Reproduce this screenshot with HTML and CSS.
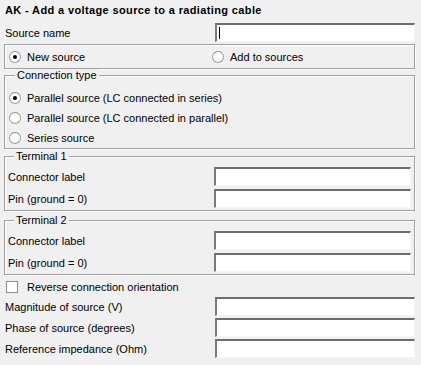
FILE: index.html
```html
<!DOCTYPE html>
<html lang="en">
<head>
    <meta charset="UTF-8">
    <title>AK - Add a voltage source to a radiating cable</title>
    <link rel="stylesheet" href="styles.css">
</head>
<body>
    <div class="dialog">
        <div class="title">AK - Add a voltage source to a radiating cable</div>

        <div class="row top-row">
            <span class="label">Source name</span>
            <input type="text" class="field focused">
        </div>

        <div class="group mode-group">
            <label class="option half"><span class="radio checked"></span>New source</label>
            <label class="option half"><span class="radio"></span>Add to sources</label>
        </div>

        <div class="group box box-connection">
            <span class="legend">Connection type</span>
            <label class="option"><span class="radio checked"></span>Parallel source (LC connected in series)</label>
            <label class="option"><span class="radio"></span>Parallel source (LC connected in parallel)</label>
            <label class="option"><span class="radio"></span>Series source</label>
        </div>

        <div class="group box box-terminal first">
            <span class="legend">Terminal 1</span>
            <div class="row"><span class="label">Connector label</span><input type="text" class="field"></div>
            <div class="row"><span class="label">Pin (ground = 0)</span><input type="text" class="field"></div>
        </div>

        <div class="group box box-terminal">
            <span class="legend">Terminal 2</span>
            <div class="row"><span class="label">Connector label</span><input type="text" class="field"></div>
            <div class="row"><span class="label">Pin (ground = 0)</span><input type="text" class="field"></div>
        </div>

        <label class="option check-row"><span class="checkbox"></span>Reverse connection orientation</label>

        <div class="row"><span class="label">Magnitude of source (V)</span><input type="text" class="field"></div>
        <div class="row"><span class="label">Phase of source (degrees)</span><input type="text" class="field"></div>
        <div class="row"><span class="label">Reference impedance (Ohm)</span><input type="text" class="field"></div>
    </div>
</body>
</html>
```

FILE: styles.css
```css
* {
    margin: 0;
    padding: 0;
    box-sizing: border-box;
}

body {
    font-family: 'Liberation Sans', Arial, sans-serif;
    font-size: 11px;
    color: #000;
    background: #f0f0f0;
    width: 421px;
    height: 365px;
    overflow: hidden;
}

.dialog {
    padding: 3px 6px 0 4px;
    display: flex;
    flex-direction: column;
}

.title {
    font-weight: bold;
    font-size: 11px;
    letter-spacing: 0.37px;
    padding-left: 1px;
    height: 16px;
    line-height: 14px;
}

.row {
    display: flex;
    align-items: center;
    height: 21px;
    flex: none;
}

.top-row {
    margin-top: 3px;
}

.label {
    flex: 1;
    padding-left: 1px;
    white-space: nowrap;
}

.field {
    width: 200px;
    height: 19px;
    border-style: solid;
    border-width: 2px 1px 1px 2px;
    border-color: #6d6d6d #f5f5f5 #f5f5f5 #7a7a7a;
    background: #fff;
    outline: none;
    font: inherit;
    padding: 0 3px;
}

/* text cursor in the focused field */
.field.focused {
    background: linear-gradient(#000, #000) no-repeat 2px 2px / 1px 12px, #fff;
}

.group {
    border: 1px solid #a0a0a0;
    box-shadow: inset 1px 1px 0 #fff, 1px 1px 0 #fff;
    flex: none;
}

.box {
    display: flex;
    flex-direction: column;
}

/* group caption sits across the top border */
.legend {
    align-self: flex-start;
    margin: -7px 0 0 6px;
    padding: 0 2px;
    height: 13px;
    line-height: 13px;
    background: #f0f0f0;
}

.mode-group {
    display: flex;
    height: 25px;
    margin-top: 1px;
    padding: 0 4px;
    align-items: center;
}

.half {
    width: 203px;
}

.option {
    display: flex;
    align-items: center;
    height: 20px;
    flex: none;
    white-space: nowrap;
}

.radio {
    width: 12px;
    height: 12px;
    border-radius: 50%;
    border: 1px solid #a0a0a0;
    border-top-color: #8a8a8a;
    background: radial-gradient(circle, #fff 55%, #e8e8e8 100%);
    margin-right: 6px;
    flex: none;
    position: relative;
}

.radio.checked::after {
    content: "";
    position: absolute;
    left: 3px;
    top: 3px;
    width: 4px;
    height: 4px;
    border-radius: 50%;
    background: #000;
}

.box-connection {
    margin-top: 6px;
    padding: 0 4px;
}

.box-connection .legend {
    margin-bottom: 6px;
}

.box-terminal {
    margin-top: 9px;
    padding: 0 3px 1px 3px;
    gap: 1px;
}

.box-terminal.first {
    margin-top: 7px;
}

.box-terminal .legend {
    margin-bottom: 2px;
}

.box-terminal .label {
    padding-left: 0;
}

.box-terminal .field {
    width: 197px;
}

.check-row {
    margin-top: 3px;
    height: 18px;
    padding-left: 2px;
}

.checkbox {
    width: 12px;
    height: 12px;
    border: 1px solid #8f8f8f;
    background: #fff;
    margin-right: 9px;
    flex: none;
}
```
